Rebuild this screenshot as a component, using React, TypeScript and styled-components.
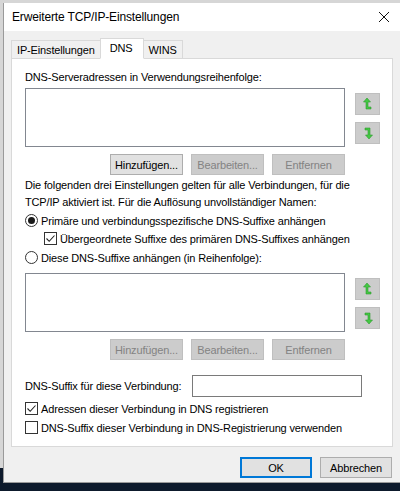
import React from "react";
import styled, { createGlobalStyle } from "styled-components";

const Global = createGlobalStyle`
  html, body { margin: 0; padding: 0; }
  body {
    background: #0d1a2c;
    font-family: "Segoe UI", "Liberation Sans", Arial, sans-serif;
    font-size: 11px;
    letter-spacing: -0.15px;
    color: #000;
  }
`;

const Desktop = styled.div`
  position: relative;
  width: 400px;
  height: 491px;
  overflow: hidden;
  background: #0d1a2c;
`;

/* the window lying behind the dialog */
const BackWindow = styled.div`
  position: absolute;
  left: 0;
  top: 0;
  width: 400px;
  height: 468px;
  background: #d6d6d6;
`;

const Dialog = styled.div`
  position: absolute;
  left: 3px;
  top: 3px;
  width: 397px;
  height: 480px;
  display: flex;
  flex-direction: column;
  background: #f0f0f0;
  border-left: 1px solid #9a9a9a;
  border-bottom: 1px solid #9a9a9a;
  box-sizing: border-box;
`;

const TitleBar = styled.div`
  height: 28px;
  flex: none;
  display: flex;
  align-items: center;
  justify-content: space-between;
  background: #fff;
  padding: 0 9px 0 8px;
`;

const Title = styled.span`
  font-size: 12px;
  letter-spacing: -0.15px;
  color: #000;
`;

const CloseIcon = styled.svg`
  width: 12px;
  height: 12px;
  margin-right: 1px;
`;

const Body = styled.div`
  flex: 1;
  display: flex;
  flex-direction: column;
  padding: 7px 8px 0 7px;
`;

const TabRow = styled.div`
  display: flex;
  align-items: flex-end;
  height: 21px;
  position: relative;
  z-index: 1;
  margin-bottom: -1px;
`;

const Tab = styled.div<{ $active?: boolean }>`
  box-sizing: border-box;
  height: ${(p) => (p.$active ? "21px" : "19px")};
  padding: ${(p) => (p.$active ? "1px 10px 0 9px" : "1px 5px 0 5px")};
  display: flex;
  align-items: ${(p) => (p.$active ? "flex-start" : "center")};
  background: ${(p) => (p.$active ? "#fff" : "#f0f0f0")};
  border: 1px solid #d9d9d9;
  border-bottom: ${(p) => (p.$active ? "1px solid #fff" : "1px solid #d9d9d9")};
  margin-left: ${(p) => (p.$active ? "-1px" : "0")};
  margin-right: ${(p) => (p.$active ? "-1px" : "0")};
  position: relative;
  z-index: ${(p) => (p.$active ? 2 : 1)};
  line-height: 17px;
`;

const Panel = styled.div`
  box-sizing: border-box;
  width: 382px;
  height: 389px;
  background: #fff;
  border: 1px solid #d9d9d9;
  padding: 11px 0 0 13px;
  display: flex;
  flex-direction: column;
`;

const Label = styled.div`
  line-height: 15px;
  height: 15px;
`;

const ListRow = styled.div<{ $top: number }>`
  display: flex;
  gap: 10px;
  margin-top: ${(p) => p.$top}px;
`;

const ListBox = styled.div`
  box-sizing: border-box;
  width: 320px;
  height: 59px;
  border: 1px solid #828790;
  background: #fff;
`;

const ArrowColumn = styled.div`
  display: flex;
  flex-direction: column;
  gap: 7px;
  padding-top: 5px;
`;

const ArrowButton = styled.div`
  box-sizing: border-box;
  width: 25px;
  height: 22px;
  background: #cccccc;
  border: 1px solid #bfbfbf;
  display: flex;
  align-items: center;
  justify-content: center;
`;

const ButtonRow = styled.div<{ $top: number }>`
  display: flex;
  gap: 8px;
  margin-top: ${(p) => p.$top}px;
  padding-left: 85px;
`;

const Button = styled.div<{ $disabled?: boolean; $default?: boolean }>`
  box-sizing: border-box;
  width: 73px;
  height: 21px;
  display: flex;
  align-items: center;
  justify-content: center;
  background: ${(p) => (p.$disabled ? "#cccccc" : "#e1e1e1")};
  border: 1px solid
    ${(p) => (p.$default ? "#0078d7" : p.$disabled ? "#bfbfbf" : "#adadad")};
  box-shadow: ${(p) => (p.$default ? "inset 0 0 0 1px #0078d7" : "none")};
  color: ${(p) => (p.$disabled ? "#838383" : "#000")};
`;

const Paragraph = styled.div`
  margin-top: 2px;
  line-height: 17px;
  width: 345px;
`;

const OptionRow = styled.div<{ $top: number; $indent?: number }>`
  display: flex;
  align-items: center;
  gap: 3px;
  height: 15px;
  margin-top: ${(p) => p.$top}px;
  margin-left: ${(p) => p.$indent || 0}px;
`;

const RadioCircle = styled.span<{ $checked?: boolean }>`
  box-sizing: border-box;
  width: 13px;
  height: 13px;
  border-radius: 50%;
  border: 1px solid #333;
  background: #fff;
  display: flex;
  align-items: center;
  justify-content: center;
  &::after {
    content: "";
    width: 7px;
    height: 7px;
    border-radius: 50%;
    background: ${(p) => (p.$checked ? "#1a1a1a" : "transparent")};
  }
`;

const CheckBox = styled.span`
  box-sizing: border-box;
  width: 13px;
  height: 13px;
  border: 1px solid #333;
  background: #fff;
  display: flex;
  align-items: center;
  justify-content: center;
`;

const SuffixRow = styled.div`
  display: flex;
  align-items: center;
  margin-top: 15px;
  gap: 11px;
`;

const TextInput = styled.div`
  box-sizing: border-box;
  width: 170px;
  height: 22px;
  border: 1px solid #7a7a7a;
  background: #fff;
`;

const Footer = styled.div`
  display: flex;
  justify-content: flex-end;
  gap: 8px;
  margin-top: 10px;
`;

const FooterButton = styled(Button)`
  width: 72px;
  height: 21px;
`;

const UpArrow = () => (
  <svg width="12" height="14" viewBox="0 0 12 14">
    <path
      d="M5 1 L1.5 5 L4 5 L4 12 L9 12 L9 10 L6 10 L6 5 L8.5 5 Z"
      fill="#44c844"
      stroke="#2f9a2f"
      strokeWidth="0.6"
      strokeLinejoin="round"
    />
  </svg>
);

const DownArrow = () => (
  <svg width="12" height="14" viewBox="0 0 12 14">
    <path
      d="M3 2 L8 2 L8 9 L10.5 9 L7 13 L3.5 9 L6 9 L6 4 L3 4 Z"
      fill="#44c844"
      stroke="#2f9a2f"
      strokeWidth="0.6"
      strokeLinejoin="round"
    />
  </svg>
);

const Tick = () => (
  <svg width="11" height="11" viewBox="0 0 11 11">
    <path d="M1.5 5.5 L4.2 8.3 L9.5 2.5" fill="none" stroke="#222" strokeWidth="1.1" />
  </svg>
);

const Radio = ({ checked, children, top }: { checked?: boolean; children: React.ReactNode; top: number }) => (
  <OptionRow $top={top}>
    <RadioCircle $checked={checked} />
    <span>{children}</span>
  </OptionRow>
);

const Check = ({
  checked,
  children,
  top,
  indent,
}: {
  checked?: boolean;
  children: React.ReactNode;
  top: number;
  indent?: number;
}) => (
  <OptionRow $top={top} $indent={indent}>
    <CheckBox>{checked && <Tick />}</CheckBox>
    <span>{children}</span>
  </OptionRow>
);

const OrderedList = ({ top, addEnabled }: { top: number; addEnabled?: boolean }) => (
  <>
    <ListRow $top={top}>
      <ListBox />
      <ArrowColumn>
        <ArrowButton>
          <UpArrow />
        </ArrowButton>
        <ArrowButton>
          <DownArrow />
        </ArrowButton>
      </ArrowColumn>
    </ListRow>
    <ButtonRow $top={7}>
      <Button $disabled={!addEnabled}>Hinzufügen...</Button>
      <Button $disabled>Bearbeiten...</Button>
      <Button $disabled>Entfernen</Button>
    </ButtonRow>
  </>
);

export default function App() {
  return (
    <>
      <Global />
      <Desktop>
        <BackWindow />
        <Dialog>
          <TitleBar>
            <Title>Erweiterte TCP/IP-Einstellungen</Title>
            <CloseIcon viewBox="0 0 12 12">
              <path d="M1 1 L11 11 M11 1 L1 11" stroke="#111" strokeWidth="1" />
            </CloseIcon>
          </TitleBar>
          <Body>
            <TabRow>
              <Tab>IP-Einstellungen</Tab>
              <Tab $active>DNS</Tab>
              <Tab>WINS</Tab>
            </TabRow>
            <Panel>
              <Label>DNS-Serveradressen in Verwendungsreihenfolge:</Label>
              <OrderedList top={3} addEnabled />
              <Paragraph>
                Die folgenden drei Einstellungen gelten für alle Verbindungen, für die TCP/IP aktiviert
                ist. Für die Auflösung unvollständiger Namen:
              </Paragraph>
              <Radio checked top={2}>
                Primäre und verbindungsspezifische DNS-Suffixe anhängen
              </Radio>
              <Check checked top={3} indent={19}>
                Übergeordnete Suffixe des primären DNS-Suffixes anhängen
              </Check>
              <Radio top={4}>Diese DNS-Suffixe anhängen (in Reihenfolge):</Radio>
              <OrderedList top={8} />
              <SuffixRow>
                <Label>DNS-Suffix für diese Verbindung:</Label>
                <TextInput />
              </SuffixRow>
              <Check checked top={4}>
                Adressen dieser Verbindung in DNS registrieren
              </Check>
              <Check top={4}>DNS-Suffix dieser Verbindung in DNS-Registrierung verwenden</Check>
            </Panel>
            <Footer>
              <FooterButton $default>OK</FooterButton>
              <FooterButton>Abbrechen</FooterButton>
            </Footer>
          </Body>
        </Dialog>
      </Desktop>
    </>
  );
}
